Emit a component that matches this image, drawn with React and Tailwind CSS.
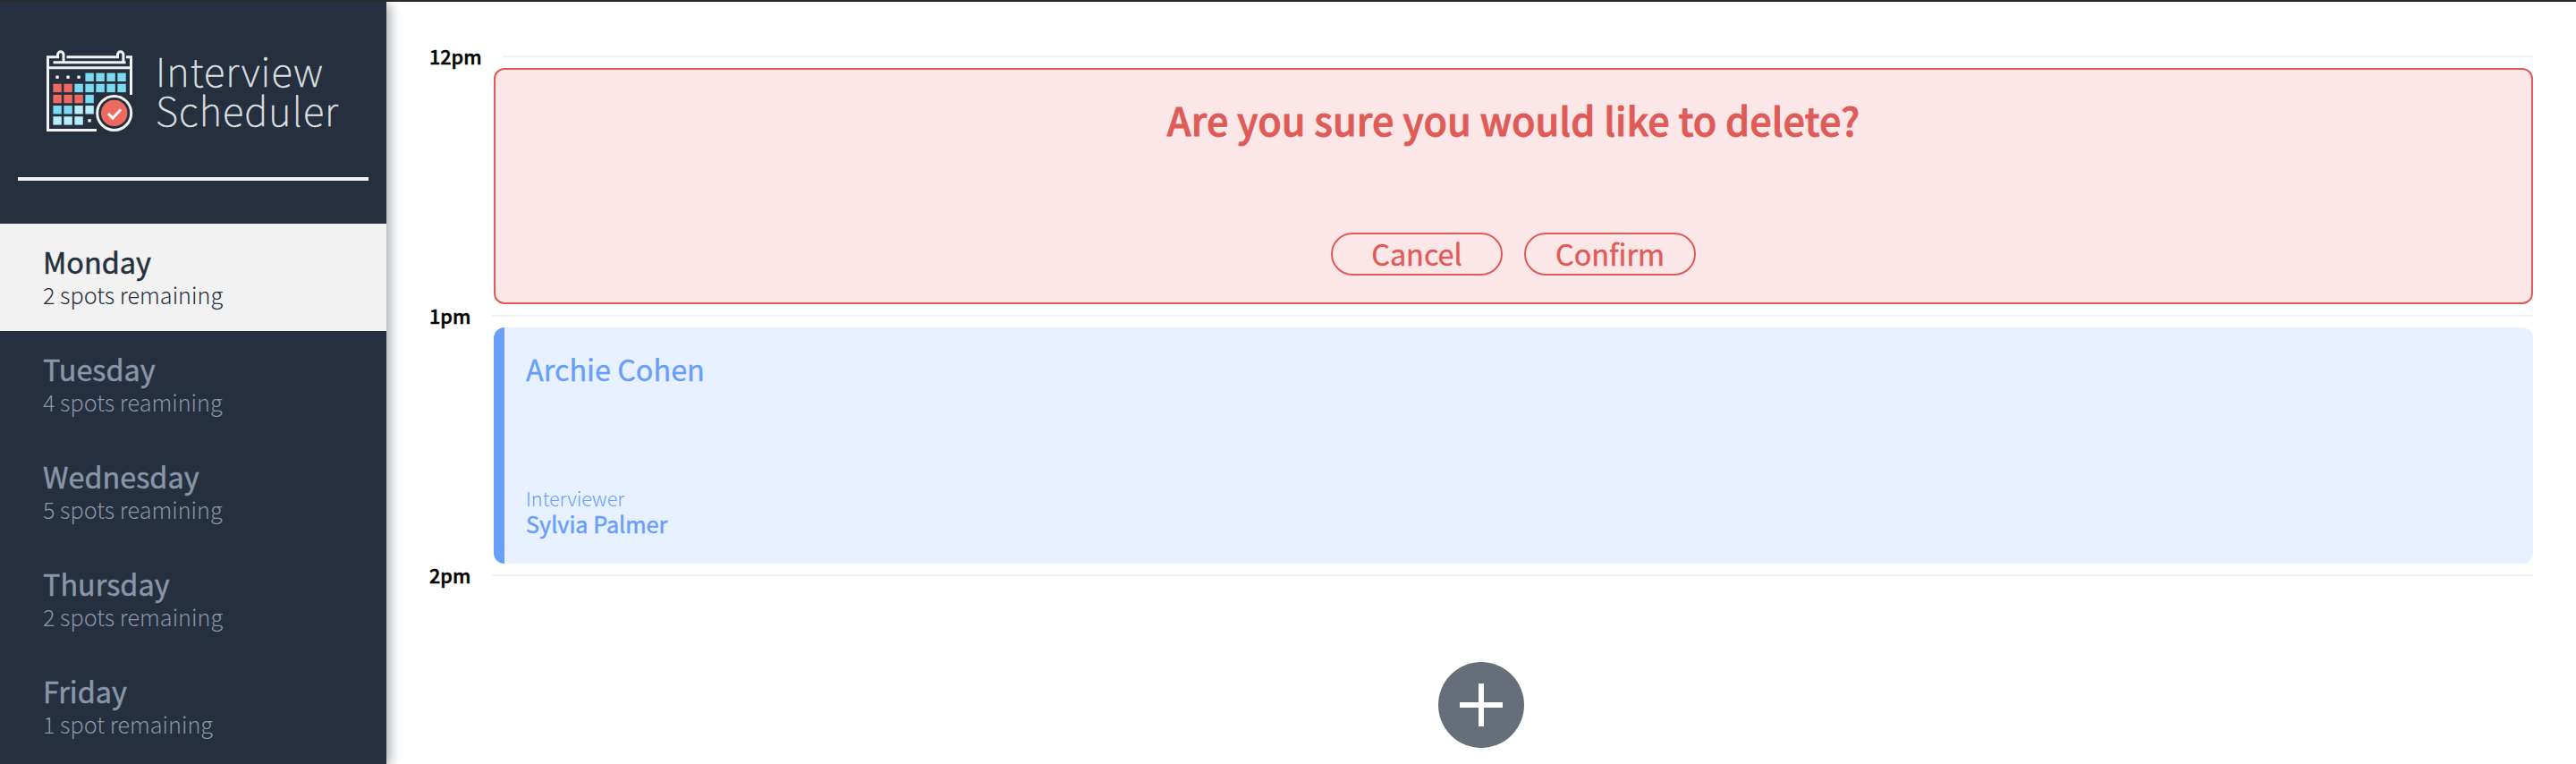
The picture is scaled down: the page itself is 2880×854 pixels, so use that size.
const days = [
  { name: "Monday", spots: "2 spots remaining", active: true },
  { name: "Tuesday", spots: "4 spots reamining" },
  { name: "Wednesday", spots: "5 spots reamining" },
  { name: "Thursday", spots: "2 spots remaining" },
  { name: "Friday", spots: "1 spot remaining" },
];

const C = "#7dd9f0";
const R = "#ee6a61";
const L = "#b8eef9";
const cells = [
  [null, null, null, C, C, C, C],
  [R, R, C, C, C, C, C],
  [R, R, R, C],
  [C, C, L, L],
  [L, L, L, null],
];

function CalendarIcon() {
  return (
    <svg width="98" height="94" viewBox="0 0 98 94" fill="none" className="shrink-0">
      <g stroke="#f2f2f2" strokeWidth="3">
        <path d="M56 91.500H1.500V9.700H12.600V7a3.200 3.200 0 0 1 6.400 0V15.500" />
        <path d="M22.500 9.700H79.500V7a3.200 3.200 0 0 1 6.400 0V15.500" />
        <path d="M89 9.700H94.500V52" />
        <path d="M7.500 15.700H88.500" />
        <path d="M2 21.800H94" />
      </g>
      {cells.map((row, r) =>
        row.map((c, i) =>
          c ? (
            <rect key={`${r}-${i}`} x={7.400 + i * 12} y={27.600 + r * 12.150} width="9.400" height="9.400" fill={c} />
          ) : (
            <rect key={`${r}-${i}`} x={10.400 + i * 12} y={30.600 + r * 12.150} width="3.300" height="3.300" fill="#fff" />
          )
        )
      )}
      <circle cx="75.700" cy="72.400" r="19" stroke="#f2f2f2" strokeWidth="3" />
      <circle cx="75.700" cy="72.400" r="14.700" fill={R} />
      <path d="M69 73l5 5 9-9.500" stroke="#fff" strokeWidth="3" />
    </svg>
  );
}

function Hour({ label, line }) {
  return (
    <div className="flex h-[24px] items-start">
      <div className="whitespace-nowrap text-[21.6px] leading-[22px] font-medium text-black [-webkit-text-stroke:0.5px]">{label}</div>
      <div className={`ml-auto mt-[10px] h-[2px] bg-[#f2f2f2] ${line}`} />
    </div>
  );
}

function PillButton({ children }) {
  return (
    <button className="h-[48px] w-[192px] rounded-[24px] border-2 border-[#de5b57] text-[32.4px] leading-[41px] [-webkit-text-stroke:0.4px]">
      <span className="block h-[44px]">{children}</span>
    </button>
  );
}

export default function App() {
  return (
    <div className="flex h-[854px] w-[2880px] flex-col overflow-hidden bg-white font-['Noto_Sans_CJK_SC',sans-serif]">
      <div className="h-[2px] shrink-0 bg-[#2a2a2a]" />
      <div className="flex min-h-0 flex-1">
        <aside className="w-[432px] shrink-0 bg-[#252f3d] shadow-[4px_2px_12px_rgba(37,47,61,0.4)]">
          <div className="flex h-[196px] items-start pt-[52px] pl-[52px]">
            <CalendarIcon />
            <div className="ml-[24px] pt-[2px] text-[43.8px] leading-[44px] font-thin tracking-[1.1px] text-[#dfe1e3] [-webkit-text-stroke:0.6px]">
              <div>Interview</div>
              <div>Scheduler</div>
            </div>
          </div>
          <div className="mx-[20px] mb-[48px] h-[4px] bg-[#f2f2f2]" />
          <nav>
            {days.map((d) => (
              <div
                key={d.name}
                className={`h-[120px] pt-[24px] pl-[48px] ${d.active ? "bg-[#f2f2f2] text-[#252f3d]" : "text-[#8796a8]"}`}
              >
                <div className="text-[32.4px] leading-[36px] [-webkit-text-stroke:0.5px]">{d.name}</div>
                <div className="text-[25.2px] leading-[38px] font-light">{d.spots}</div>
              </div>
            ))}
          </nav>
        </aside>
        <main className="flex-1 pt-[50px] pr-[48px] pl-[48px]">
          <Hour label="12pm" line="w-[2270px]" />
          <section className="ml-[72px] flex h-[264px] flex-col items-center rounded-[12px] border-2 border-[#de5b57] bg-[#fbe7e7] text-[#de5b57]">
            <h1 className="mt-[30px] text-[43.2px] leading-[50px] font-medium [-webkit-text-stroke:0.8px]">Are you sure you would like to delete?</h1>
            <div className="mt-[102px] flex gap-[24px]">
              <PillButton>Cancel</PillButton>
              <PillButton>Confirm</PillButton>
            </div>
          </section>
          <div className="h-[2px]" />
          <Hour label="1pm" line="w-[2282px]" />
          <section className="ml-[72px] flex h-[264px] flex-col overflow-hidden rounded-[12px] border-l-[12px] border-[#699ef9] bg-[#e8f1ff] pl-[24px] text-[#699ef9]">
            <div className="mt-[24px] text-[32.4px] leading-[44px] [-webkit-text-stroke:0.4px]">Archie Cohen</div>
            <div className="mt-[108px] text-[21.6px] leading-[30px] font-light">Interviewer</div>
            <div className="text-[25.2px] leading-[27px] [-webkit-text-stroke:0.5px]">Sylvia Palmer</div>
          </section>
          <div className="h-[2px]" />
          <Hour label="2pm" line="w-[2282px]" />
          <div className="mt-[84px] flex pl-[1128px]">
            <svg width="96" height="96" viewBox="0 0 96 96">
              <circle cx="48" cy="48" r="48" fill="#666e79" />
              <path d="M48 24V72M24 48H72" stroke="#fff" strokeWidth="6" />
            </svg>
          </div>
        </main>
      </div>
    </div>
  );
}
